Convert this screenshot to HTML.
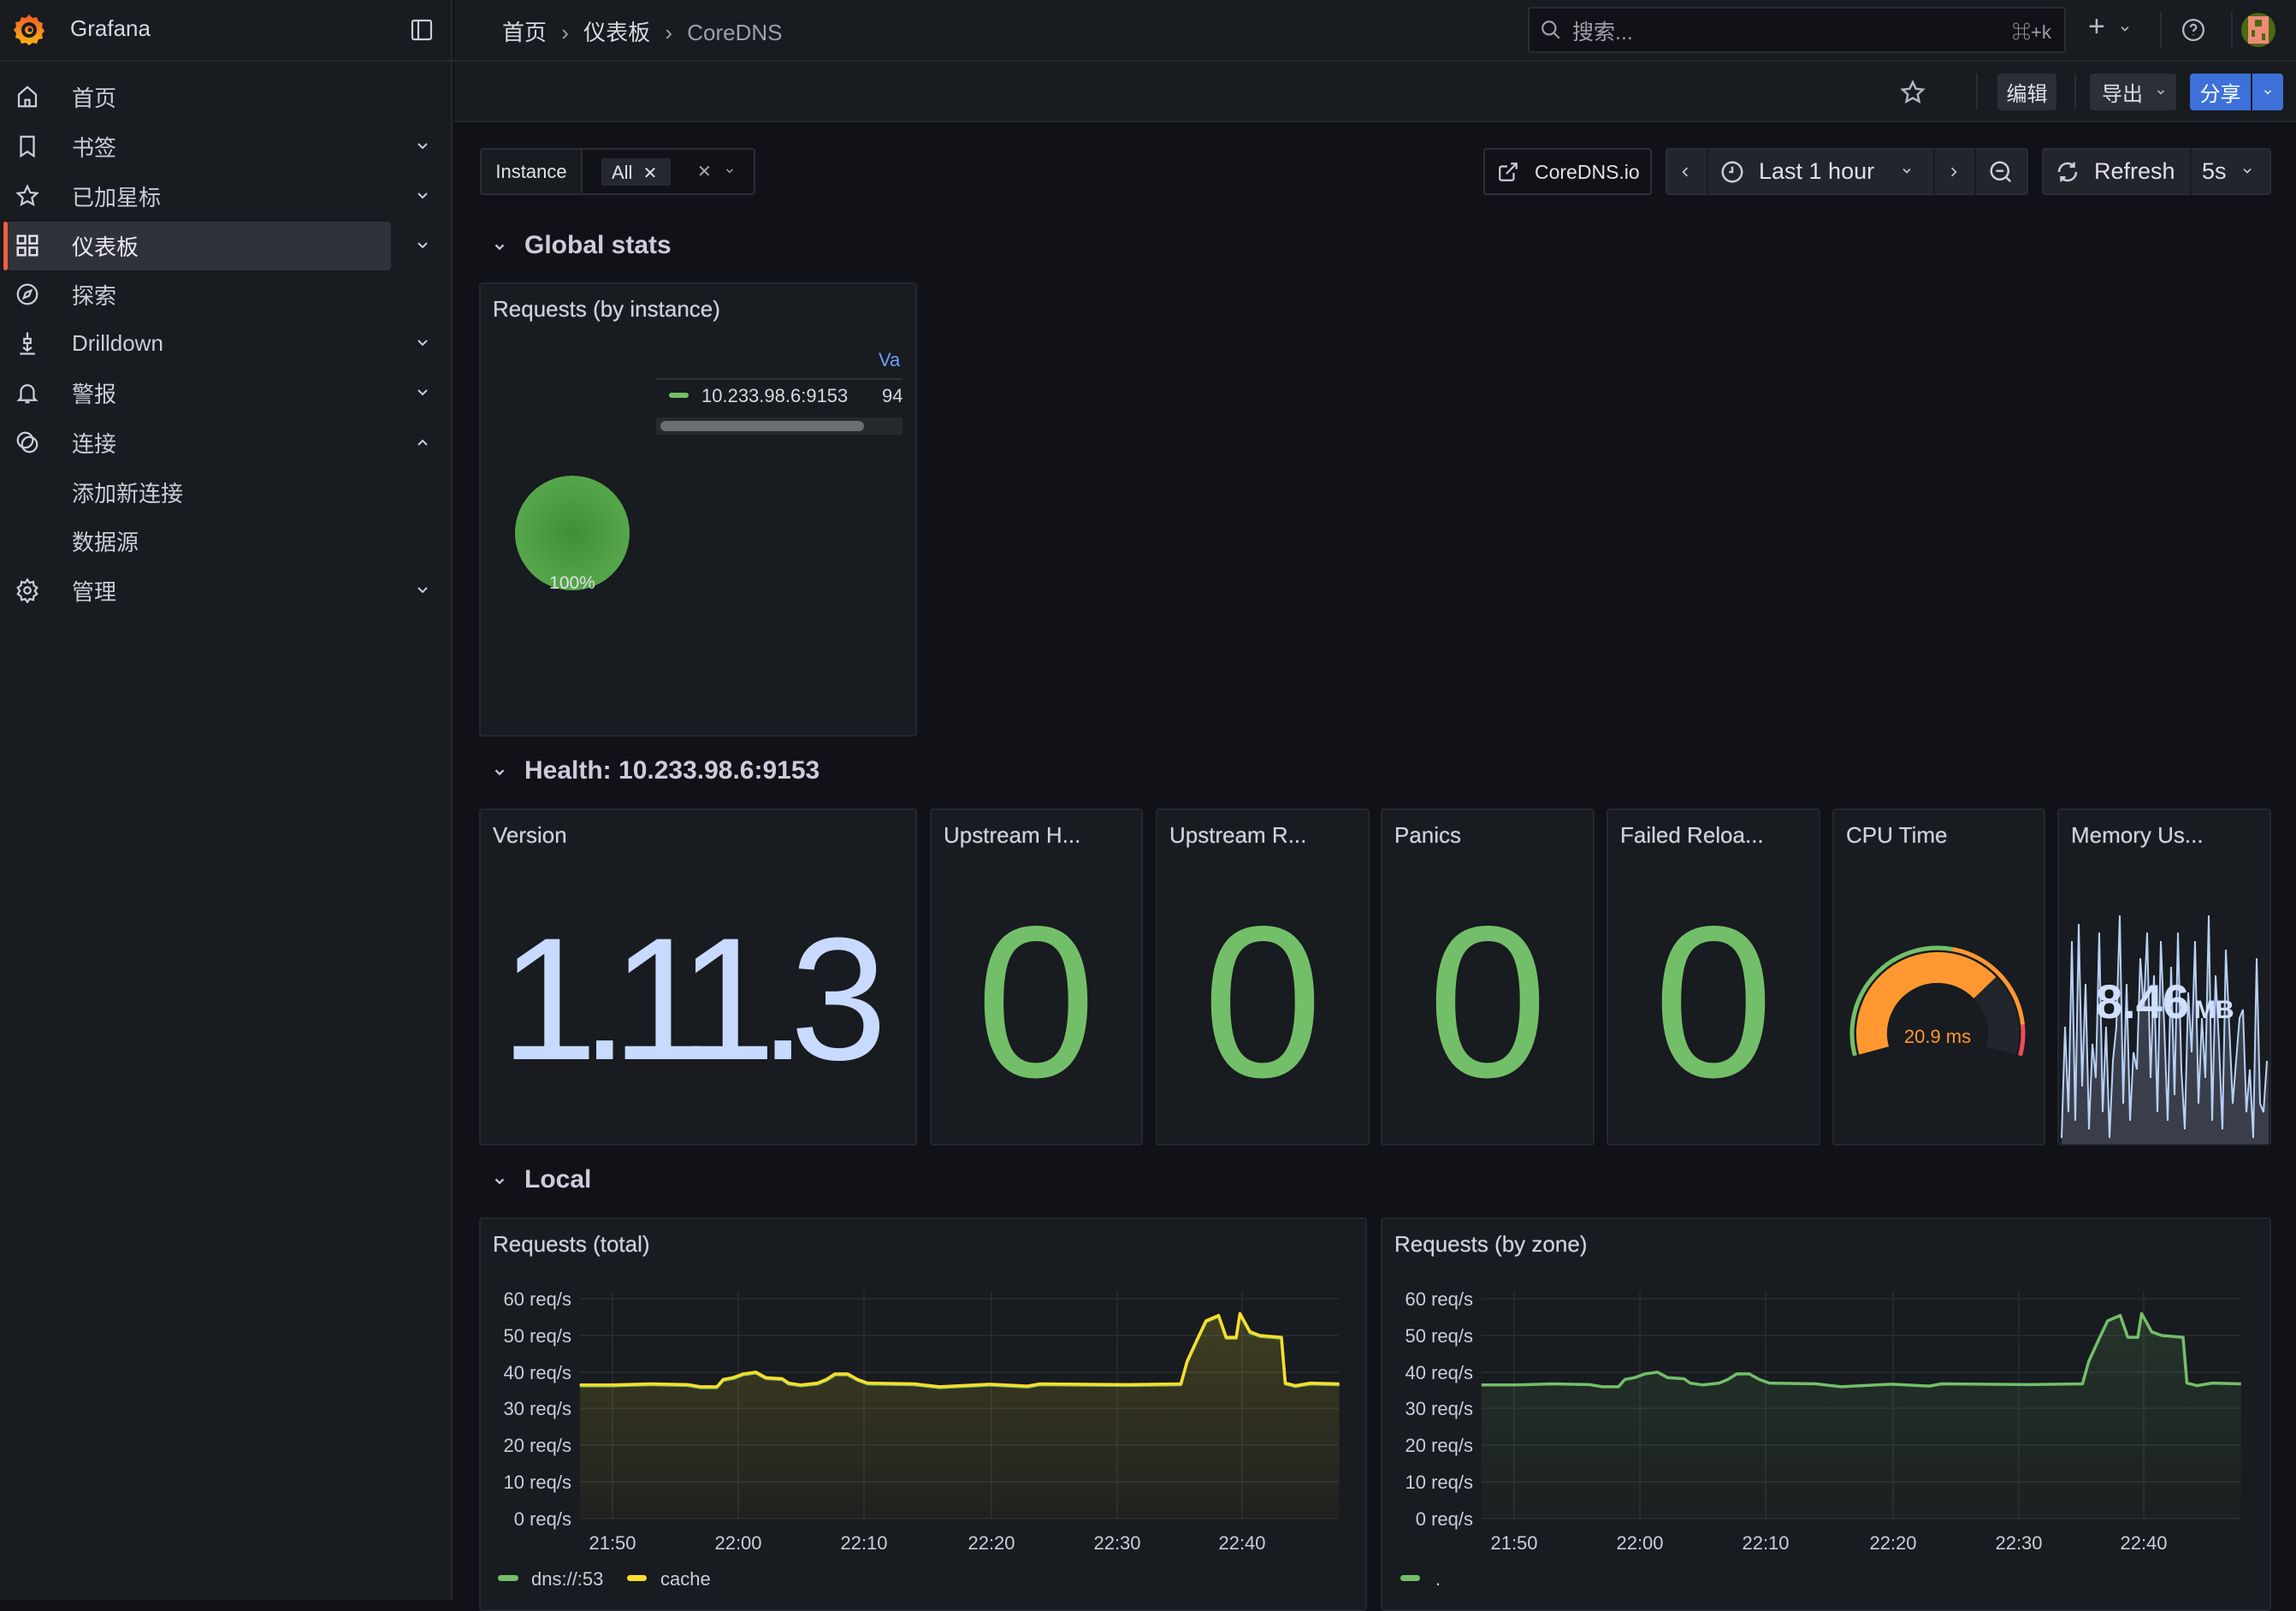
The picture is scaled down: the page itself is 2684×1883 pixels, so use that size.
<!DOCTYPE html>
<html><head><meta charset="utf-8">
<style>
*{margin:0;padding:0;box-sizing:border-box}
body{width:2684px;height:1870px;background:#111217;position:relative;overflow:hidden;font-family:"Liberation Sans","Noto Sans CJK SC",sans-serif;color:#ccccdc}
.a{position:absolute}
.sb{left:0;top:0;width:529px;height:1870px;background:#181b1f;border-right:2px solid #25282d}
.nav{position:absolute;left:0;width:529px;height:58px;font-size:26px;color:#ccccdc;display:flex;align-items:center}
.nav .t{position:absolute;left:84px}
.nav svg.i{position:absolute;left:17px;width:30px;height:30px}
.nav .ch{position:absolute;left:484px;width:20px;height:20px}
.panel{position:absolute;background:#181b1f;border:2px solid #24272d;border-radius:4px}
.ptitle{position:absolute;left:14px;top:14px;font-size:26px;color:#d0d0dc;white-space:nowrap;text-shadow:0 0 0.6px #d0d0dc}
.btn{position:absolute;border-radius:4px;font-size:24px;display:flex;align-items:center;justify-content:center}
.row{position:absolute;font-size:30px;font-weight:bold;color:#ccccdc}
</style></head><body>

<!-- sidebar -->
<div class="a sb"></div>
<div class="a" style="left:0;top:70px;width:2684px;height:2px;background:#25282d"></div>
<svg class="a" style="left:14px;top:14px" width="40" height="40" viewBox="0 0 40 40">
<defs><linearGradient id="lg" x1="0" y1="1" x2="0" y2="0"><stop offset="0" stop-color="#f9b416"/><stop offset="1" stop-color="#f05a28"/></linearGradient></defs>
<path d="M20 3l4 4 5-1 2 5 5 2-1 5 3 4-3 4 1 5-5 1-2 5-5-1-4 3-4-3-5 1-2-5-5-2 1-5-3-4 3-4-1-5 5-1 2-5 5 1z" fill="url(#lg)"/>
<circle cx="20" cy="21" r="9" fill="#181b1f"/><circle cx="20" cy="21" r="5" fill="url(#lg)"/><circle cx="21" cy="21" r="2.5" fill="#181b1f"/>
</svg>
<div class="a" style="left:82px;top:18px;font-size:26px;color:#d8d9e0">Grafana</div>
<svg class="a" style="left:480px;top:22px" width="26" height="26" viewBox="0 0 26 26" fill="none" stroke="#ccccdc" stroke-width="2.2"><rect x="2" y="2" width="22" height="22" rx="2"/><line x1="9" y1="2" x2="9" y2="24"/></svg>

<div class="a" style="left:8px;top:259px;width:449px;height:57px;background:#2f3238;border-radius:4px"></div>
<div class="a" style="left:4px;top:259px;width:5px;height:57px;background:#f55f3e;border-radius:3px"></div>

<div class="nav" style="top:84px"><svg class="i" viewBox="0 0 24 24" fill="none" stroke="#ccccdc" stroke-width="1.8"><path d="M4 10l8-7 8 7v11H4z M10 21v-6h4v6"/></svg><span class="t">首页</span></div>
<div class="nav" style="top:142px"><svg class="i" viewBox="0 0 24 24" fill="none" stroke="#ccccdc" stroke-width="1.8"><path d="M6 3h12v18l-6-4-6 4z"/></svg><span class="t">书签</span><svg class="ch" viewBox="0 0 20 20" fill="none" stroke="#ccccdc" stroke-width="2"><path d="M5 7l5 5 5-5"/></svg></div>
<div class="nav" style="top:200px"><svg class="i" viewBox="0 0 24 24" fill="none" stroke="#ccccdc" stroke-width="1.8"><path d="M12 3l2.7 5.8 6.3.7-4.7 4.3 1.3 6.2L12 16.9 6.4 20l1.3-6.2L3 9.5l6.3-.7z"/></svg><span class="t">已加星标</span><svg class="ch" viewBox="0 0 20 20" fill="none" stroke="#ccccdc" stroke-width="2"><path d="M5 7l5 5 5-5"/></svg></div>
<div class="nav" style="top:258px"><svg class="i" viewBox="0 0 24 24" fill="none" stroke="#e0e0e8" stroke-width="2"><rect x="3" y="3" width="7" height="7"/><rect x="14" y="3" width="7" height="7"/><rect x="3" y="14" width="7" height="7"/><rect x="14" y="14" width="7" height="7"/></svg><span class="t" style="color:#e8e8ee">仪表板</span><svg class="ch" viewBox="0 0 20 20" fill="none" stroke="#ccccdc" stroke-width="2"><path d="M5 7l5 5 5-5"/></svg></div>
<div class="nav" style="top:315px"><svg class="i" viewBox="0 0 24 24" fill="none" stroke="#ccccdc" stroke-width="1.8"><circle cx="12" cy="12" r="9"/><path d="M15.5 8.5l-2 5-5 2 2-5z"/></svg><span class="t">探索</span></div>
<div class="nav" style="top:372px"><svg class="i" viewBox="0 0 24 24" fill="none" stroke="#ccccdc" stroke-width="1.8"><path d="M12 2v6M9 8h6v4H9zM12 12v6M8 16l4 3 4-3M5 22h14"/></svg><span class="t">Drilldown</span><svg class="ch" viewBox="0 0 20 20" fill="none" stroke="#ccccdc" stroke-width="2"><path d="M5 7l5 5 5-5"/></svg></div>
<div class="nav" style="top:430px"><svg class="i" viewBox="0 0 24 24" fill="none" stroke="#ccccdc" stroke-width="1.8"><path d="M6 17V11a6 6 0 0 1 12 0v6l2 2H4zM10 21h4"/></svg><span class="t">警报</span><svg class="ch" viewBox="0 0 20 20" fill="none" stroke="#ccccdc" stroke-width="2"><path d="M5 7l5 5 5-5"/></svg></div>
<div class="nav" style="top:488px"><svg class="i" viewBox="0 0 24 24" fill="none" stroke="#ccccdc" stroke-width="1.8"><circle cx="10" cy="10" r="7"/><circle cx="14" cy="14" r="7"/></svg><span class="t">连接</span><svg class="ch" viewBox="0 0 20 20" fill="none" stroke="#ccccdc" stroke-width="2"><path d="M5 13l5-5 5 5"/></svg></div>
<div class="nav" style="top:546px"><span class="t">添加新连接</span></div>
<div class="nav" style="top:603px"><span class="t">数据源</span></div>
<div class="nav" style="top:661px"><svg class="i" viewBox="0 0 24 24" fill="none" stroke="#ccccdc" stroke-width="1.8"><circle cx="12" cy="12" r="3"/><path d="M12 2l2 3 3.5-1 .5 3.5 3 2-2 3 2 3-3 2-.5 3.5L14 20l-2 3-2-3-3.5 1L6 17.5l-3-2 2-3-2-3 3-2L6.5 4 10 5z"/></svg><span class="t">管理</span><svg class="ch" viewBox="0 0 20 20" fill="none" stroke="#ccccdc" stroke-width="2"><path d="M5 7l5 5 5-5"/></svg></div>

<!-- top bars -->
<div class="a" style="left:531px;top:0;width:2153px;height:70px;background:#181b1f"></div>
<div class="a" style="left:531px;top:72px;width:2153px;height:71px;background:#181b1f;border-bottom:2px solid #25282d"></div>
<div class="a" style="left:587px;top:18px;font-size:26px;color:#d8d9e0">首页 <span style="color:#9fa1a8;margin:0 10px">›</span> 仪表板 <span style="color:#9fa1a8;margin:0 10px">›</span> <span style="color:#9fa1a8">CoreDNS</span></div>

<div class="a" style="left:1786px;top:8px;width:629px;height:54px;background:#111217;border:2px solid #2a2d33;border-radius:4px"></div>
<svg class="a" style="left:1800px;top:22px" width="26" height="26" viewBox="0 0 24 24" fill="none" stroke="#9fa1a8" stroke-width="2"><circle cx="10" cy="10" r="7"/><path d="M15 15l6 6"/></svg>
<div class="a" style="left:1838px;top:18px;font-size:25px;color:#9fa1a8">搜索...</div>
<div class="a" style="left:2352px;top:20px;font-size:22px;color:#9fa1a8">⌘+k</div>
<div class="a" style="left:2441px;top:12px;font-size:34px;color:#b8b9c0">+</div>
<svg class="a" style="left:2476px;top:26px" width="16" height="16" viewBox="0 0 20 20" fill="none" stroke="#b8b9c0" stroke-width="2"><path d="M5 7l5 5 5-5"/></svg>
<div class="a" style="left:2525px;top:14px;width:2px;height:42px;background:#2a2d33"></div>
<svg class="a" style="left:2549px;top:20px" width="30" height="30" viewBox="0 0 24 24" fill="none" stroke="#b8b9c0" stroke-width="1.8"><circle cx="12" cy="12" r="9.5"/><path d="M9.5 9.5a2.5 2.5 0 1 1 3.5 2.3c-.7.4-1 .9-1 1.7M12 16.5v.5"/></svg>
<div class="a" style="left:2608px;top:14px;width:2px;height:42px;background:#2a2d33"></div>
<svg class="a" style="left:2620px;top:14px" width="40" height="42" viewBox="0 0 10 10"><ellipse cx="5" cy="5" rx="5" ry="5" fill="#4a6a10"/><rect x="2" y="1" width="6" height="8" fill="#f08a78"/><rect x="4" y="2" width="2" height="2" fill="#4a6a10"/><rect x="3" y="5" width="1" height="2" fill="#4a6a10"/><rect x="6" y="6" width="1" height="2" fill="#4a6a10"/></svg>

<svg class="a" style="left:2220px;top:92px" width="32" height="32" viewBox="0 0 24 24" fill="none" stroke="#b8b9c0" stroke-width="1.8"><path d="M12 3l2.7 5.8 6.3.7-4.7 4.3 1.3 6.2L12 16.9 6.4 20l1.3-6.2L3 9.5l6.3-.7z"/></svg>
<div class="a" style="left:2310px;top:86px;width:2px;height:42px;background:#2a2d33"></div>
<div class="btn" style="left:2335px;top:86px;width:69px;height:43px;background:#2c2f35;color:#e0e0e6">编辑</div>
<div class="a" style="left:2425px;top:86px;width:2px;height:42px;background:#2a2d33"></div>
<div class="btn" style="left:2443px;top:86px;width:101px;height:43px;background:#2c2f35;color:#e0e0e6;justify-content:flex-start;padding-left:14px">导出<svg style="margin-left:14px" width="14" height="14" viewBox="0 0 20 20" fill="none" stroke="#ccc" stroke-width="2"><path d="M5 7l5 5 5-5"/></svg></div>
<div class="btn" style="left:2560px;top:86px;width:71px;height:43px;background:#3d71d9;color:#fff;border-radius:4px 0 0 4px">分享</div>
<div class="btn" style="left:2633px;top:86px;width:36px;height:43px;background:#3d71d9;border-radius:0 4px 4px 0"><svg width="14" height="14" viewBox="0 0 20 20" fill="none" stroke="#fff" stroke-width="2"><path d="M5 7l5 5 5-5"/></svg></div>

<!-- variables -->
<div class="a" style="left:561px;top:173px;width:322px;height:55px;border:2px solid #2a2d33;border-radius:4px;background:#111217"></div>
<div class="a" style="left:561px;top:173px;width:120px;height:55px;border:2px solid #2a2d33;border-radius:4px 0 0 4px;background:#181b1f;font-size:22px;color:#e0e0e6;display:flex;align-items:center;justify-content:center">Instance</div>
<div class="a" style="left:703px;top:185px;width:81px;height:32px;background:#25282e;border-radius:3px;font-size:22px;color:#e0e0e6;padding:4px 0 0 12px">All <span style="font-size:20px;margin-left:6px">✕</span></div>
<div class="a" style="left:815px;top:188px;font-size:20px;color:#aaa">✕</div>
<svg class="a" style="left:846px;top:193px" width="14" height="14" viewBox="0 0 20 20" fill="none" stroke="#aaa" stroke-width="2"><path d="M5 7l5 5 5-5"/></svg>

<div class="a" style="left:1734px;top:173px;width:197px;height:55px;border:2px solid #2e3137;border-radius:4px;background:#111217"></div>
<svg class="a" style="left:1750px;top:188px" width="26" height="26" viewBox="0 0 24 24" fill="none" stroke="#ccccdc" stroke-width="2"><path d="M18 13v6a2 2 0 0 1-2 2H5a2 2 0 0 1-2-2V8a2 2 0 0 1 2-2h6M15 3h6v6M10 14L21 3"/></svg>
<div class="a" style="left:1794px;top:188px;font-size:23px;color:#e0e0e6">CoreDNS.io</div>

<div class="a" style="left:1947px;top:173px;width:424px;height:55px;border:2px solid #2a2d33;border-radius:4px;background:#22252b"></div>
<div class="a" style="left:1995px;top:173px;width:2px;height:55px;background:#181b1f"></div>
<div class="a" style="left:2260px;top:173px;width:2px;height:55px;background:#181b1f"></div>
<div class="a" style="left:2308px;top:173px;width:2px;height:55px;background:#181b1f"></div>
<svg class="a" style="left:1962px;top:192px" width="16" height="18" viewBox="0 0 20 20" fill="none" stroke="#ccccdc" stroke-width="2"><path d="M13 4l-6 6 6 6"/></svg>
<svg class="a" style="left:2010px;top:186px" width="30" height="30" viewBox="0 0 24 24" fill="none" stroke="#ccccdc" stroke-width="2"><circle cx="12" cy="12" r="9"/><path d="M12 7v5H9"/></svg>
<div class="a" style="left:2056px;top:185px;font-size:27px;color:#e0e0e6">Last 1 hour</div>
<svg class="a" style="left:2221px;top:192px" width="16" height="16" viewBox="0 0 20 20" fill="none" stroke="#ccccdc" stroke-width="2"><path d="M5 7l5 5 5-5"/></svg>
<svg class="a" style="left:2276px;top:192px" width="16" height="18" viewBox="0 0 20 20" fill="none" stroke="#ccccdc" stroke-width="2"><path d="M7 4l6 6-6 6"/></svg>
<svg class="a" style="left:2324px;top:186px" width="30" height="30" viewBox="0 0 24 24" fill="none" stroke="#ccccdc" stroke-width="2"><circle cx="11" cy="11" r="8"/><path d="M7.5 11h7M17 17l4 4"/></svg>

<div class="a" style="left:2387px;top:173px;width:268px;height:55px;border:2px solid #2a2d33;border-radius:4px;background:#22252b"></div>
<div class="a" style="left:2560px;top:173px;width:2px;height:55px;background:#181b1f"></div>
<svg class="a" style="left:2402px;top:186px" width="30" height="30" viewBox="0 0 24 24" fill="none" stroke="#ccccdc" stroke-width="2"><path d="M20 12a8 8 0 0 1-14 5.3M4 12a8 8 0 0 1 14-5.3M18 3v4h-4M6 21v-4h4"/></svg>
<div class="a" style="left:2448px;top:185px;font-size:27px;color:#e0e0e6">Refresh</div>
<div class="a" style="left:2574px;top:185px;font-size:27px;color:#e0e0e6">5s</div>
<svg class="a" style="left:2619px;top:192px" width="16" height="16" viewBox="0 0 20 20" fill="none" stroke="#ccccdc" stroke-width="2"><path d="M5 7l5 5 5-5"/></svg>

<!-- rows -->
<svg class="a" style="left:575px;top:280px" width="18" height="18" viewBox="0 0 20 20" fill="none" stroke="#ccccdc" stroke-width="2.4"><path d="M5 7l5 5 5-5"/></svg>
<div class="row" style="left:613px;top:270px">Global stats</div>
<svg class="a" style="left:575px;top:894px" width="18" height="18" viewBox="0 0 20 20" fill="none" stroke="#ccccdc" stroke-width="2.4"><path d="M5 7l5 5 5-5"/></svg>
<div class="row" style="left:613px;top:884px">Health: 10.233.98.6:9153</div>
<svg class="a" style="left:575px;top:1372px" width="18" height="18" viewBox="0 0 20 20" fill="none" stroke="#ccccdc" stroke-width="2.4"><path d="M5 7l5 5 5-5"/></svg>
<div class="row" style="left:613px;top:1362px">Local</div>

<!-- panels -->
<div class="panel" style="left:560px;top:330px;width:512px;height:531px"><div class="ptitle">Requests (by instance)</div></div>
<div class="panel" style="left:560px;top:945px;width:512px;height:394px"><div class="ptitle">Version</div></div>
<div class="panel" style="left:1087px;top:945px;width:249px;height:394px"><div class="ptitle">Upstream H...</div></div>
<div class="panel" style="left:1351px;top:945px;width:250px;height:394px"><div class="ptitle">Upstream R...</div></div>
<div class="panel" style="left:1614px;top:945px;width:250px;height:394px"><div class="ptitle">Panics</div></div>
<div class="panel" style="left:1878px;top:945px;width:250px;height:394px"><div class="ptitle">Failed Reloa...</div></div>
<div class="panel" style="left:2142px;top:945px;width:249px;height:394px"><div class="ptitle">CPU Time</div></div>
<div class="panel" style="left:2405px;top:945px;width:250px;height:394px;overflow:hidden"><div class="ptitle">Memory Us...</div></div>
<div class="panel" style="left:560px;top:1423px;width:1038px;height:460px"><div class="ptitle">Requests (total)</div></div>
<div class="panel" style="left:1614px;top:1423px;width:1041px;height:460px"><div class="ptitle">Requests (by zone)</div></div>

<svg class="a" style="left:0;top:0" width="2684" height="1870" font-family="Liberation Sans, sans-serif">
<defs>
<radialGradient id="pg"><stop offset="0" stop-color="#3f8f3a"/><stop offset="1" stop-color="#56a64b"/></radialGradient>
<linearGradient id="yf" x1="0" y1="0" x2="0" y2="1"><stop offset="0" stop-color="#fade2a" stop-opacity="0.18"/><stop offset="1" stop-color="#fade2a" stop-opacity="0.03"/></linearGradient>
<linearGradient id="gf" x1="0" y1="0" x2="0" y2="1"><stop offset="0" stop-color="#73bf69" stop-opacity="0.15"/><stop offset="1" stop-color="#73bf69" stop-opacity="0.03"/></linearGradient>
<g id="grid" stroke="#2a2d33" stroke-width="1.5">
<line x1="678" y1="1518" x2="1565" y2="1518"/><line x1="678" y1="1561" x2="1565" y2="1561"/><line x1="678" y1="1604" x2="1565" y2="1604"/><line x1="678" y1="1646" x2="1565" y2="1646"/><line x1="678" y1="1689" x2="1565" y2="1689"/><line x1="678" y1="1732" x2="1565" y2="1732"/><line x1="678" y1="1775" x2="1565" y2="1775"/>
<line x1="716" y1="1510" x2="716" y2="1775"/><line x1="863" y1="1510" x2="863" y2="1775"/><line x1="1010" y1="1510" x2="1010" y2="1775"/><line x1="1159" y1="1510" x2="1159" y2="1775"/><line x1="1306" y1="1510" x2="1306" y2="1775"/><line x1="1452" y1="1510" x2="1452" y2="1775"/>
</g>
<g id="labels" fill="#ccccdc" font-size="22" text-anchor="end">
<text x="668" y="1526">60 req/s</text><text x="668" y="1569">50 req/s</text><text x="668" y="1612">40 req/s</text><text x="668" y="1654">30 req/s</text><text x="668" y="1697">20 req/s</text><text x="668" y="1740">10 req/s</text><text x="668" y="1783">0 req/s</text>
<g text-anchor="middle"><text x="716" y="1811">21:50</text><text x="863" y="1811">22:00</text><text x="1010" y="1811">22:10</text><text x="1159" y="1811">22:20</text><text x="1306" y="1811">22:30</text><text x="1452" y="1811">22:40</text></g>
</g>
<polyline id="ln" fill="none" stroke-width="3.5" stroke-linejoin="round" points="677.8,1618.8 716,1618.8 760.1,1617.5 804.2,1618.4 818.9,1620.9 838,1620.9 845.4,1612.4 857.1,1610.2 868.9,1605.9 883.6,1603.8 895.3,1610.2 914.5,1611.5 921.8,1616.6 936.5,1618.8 955.6,1616.6 965.9,1612.4 976.2,1605.9 990.9,1605.9 1002.7,1612.4 1014.4,1616.6 1068.8,1617.5 1098.2,1620.9 1157,1617.9 1201.1,1620.1 1215.8,1617.5 1318.7,1618.4 1380.4,1617.5 1387.8,1591 1399.6,1565.3 1409.8,1543.9 1424.5,1537.5 1433.4,1563.1 1445.1,1563.1 1449.5,1535.3 1461.3,1556.7 1473,1561 1498,1563.1 1502.5,1616.6 1514.2,1619.6 1531.9,1616.6 1565.7,1617.5"/>
<polygon id="ar" points="677.8,1775 677.8,1618.8 716,1618.8 760.1,1617.5 804.2,1618.4 818.9,1620.9 838,1620.9 845.4,1612.4 857.1,1610.2 868.9,1605.9 883.6,1603.8 895.3,1610.2 914.5,1611.5 921.8,1616.6 936.5,1618.8 955.6,1616.6 965.9,1612.4 976.2,1605.9 990.9,1605.9 1002.7,1612.4 1014.4,1616.6 1068.8,1617.5 1098.2,1620.9 1157,1617.9 1201.1,1620.1 1215.8,1617.5 1318.7,1618.4 1380.4,1617.5 1387.8,1591 1399.6,1565.3 1409.8,1543.9 1424.5,1537.5 1433.4,1563.1 1445.1,1563.1 1449.5,1535.3 1461.3,1556.7 1473,1561 1498,1563.1 1502.5,1616.6 1514.2,1619.6 1531.9,1616.6 1565.7,1617.5 1565.7,1775"/>
</defs>

<!-- pie panel -->
<circle cx="669" cy="623" r="67" fill="url(#pg)"/>
<text x="669" y="688" fill="#e0e0e6" font-size="21" text-anchor="middle">100%</text>
<text x="1027" y="428" fill="#6e9fff" font-size="22">Va</text>
<line x1="767" y1="443" x2="1055" y2="443" stroke="#2f3238" stroke-width="2"/>
<rect x="782" y="459" width="23" height="6" rx="3" fill="#73bf69"/>
<text x="820" y="470" fill="#d8d9e0" font-size="22">10.233.98.6:9153</text>
<text x="1031" y="470" fill="#d8d9e0" font-size="22">94</text>
<rect x="767" y="488" width="288" height="20" fill="#26292e"/>
<rect x="772" y="492" width="238" height="12" rx="6" fill="#6b6d72"/>

<!-- stats -->
<text x="801" y="1238" fill="#c8daff" font-size="204" text-anchor="middle" letter-spacing="-20">1.11.3</text>
<g fill="#73bf69" font-size="252" text-anchor="middle">
<text x="1211" y="1258">0</text><text x="1476" y="1258">0</text><text x="1739" y="1258">0</text><text x="2003" y="1258">0</text>
</g>

<!-- gauge -->
<g fill="none">
<path d="M2168.4 1233.9 A100 100 0 0 1 2282.4 1109.5" stroke="#73bf69" stroke-width="5"/>
<path d="M2282.4 1109.5 A100 100 0 0 1 2364.5 1197.5" stroke="#ff9830" stroke-width="5"/>
<path d="M2364.5 1197.5 A100 100 0 0 1 2361.6 1233.9" stroke="#f2495c" stroke-width="5"/>
<path d="M2190.6 1227.9 A77 77 0 0 1 2320.4 1154.5" stroke="#ff9830" stroke-width="36"/>
<path d="M2320.4 1154.5 A77 77 0 0 1 2339.4 1227.9" stroke="#22252b" stroke-width="36"/>
</g>
<text x="2265" y="1219" fill="#ff9830" font-size="22" text-anchor="middle">20.9 ms</text>

<!-- memory sparkline -->
<polygon fill="#3e4350" opacity="0.9" points="2410,1337 2410,1330 2414,1200 2418,1300 2422,1100 2426,1310 2430,1080 2434,1270 2438,1150 2442,1320 2446,1220 2450,1260 2454,1090 2458,1300 2462,1200 2466,1330 2470,1240 2474,1200 2478,1070 2482,1290 2486,1150 2490,1310 2494,1230 2498,1250 2502,1120 2506,1180 2510,1090 2514,1260 2518,1140 2522,1300 2526,1100 2530,1200 2534,1310 2538,1130 2542,1280 2546,1090 2550,1250 2554,1320 2558,1160 2562,1230 2566,1100 2570,1290 2574,1190 2578,1260 2582,1070 2586,1310 2590,1140 2594,1220 2598,1320 2602,1110 2606,1200 2610,1290 2614,1240 2618,1190 2622,1180 2626,1300 2630,1250 2634,1330 2638,1120 2642,1290 2646,1300 2650,1240 2652,1240 2652,1337"/>
<polyline fill="none" stroke="#b8d0f5" stroke-width="2" points="2410,1330 2414,1200 2418,1300 2422,1100 2426,1310 2430,1080 2434,1270 2438,1150 2442,1320 2446,1220 2450,1260 2454,1090 2458,1300 2462,1200 2466,1330 2470,1240 2474,1200 2478,1070 2482,1290 2486,1150 2490,1310 2494,1230 2498,1250 2502,1120 2506,1180 2510,1090 2514,1260 2518,1140 2522,1300 2526,1100 2530,1200 2534,1310 2538,1130 2542,1280 2546,1090 2550,1250 2554,1320 2558,1160 2562,1230 2566,1100 2570,1290 2574,1190 2578,1260 2582,1070 2586,1310 2590,1140 2594,1220 2598,1320 2602,1110 2606,1200 2610,1290 2614,1240 2618,1190 2622,1180 2626,1300 2630,1250 2634,1330 2638,1120 2642,1290 2646,1300 2650,1240"/>
<text x="2450" y="1190" fill="#cfe0ff" font-size="56" font-weight="bold">8.46<tspan font-size="30" dx="6">MB</tspan></text>

<!-- chart left -->
<use href="#grid"/><use href="#labels"/>
<use href="#ar" fill="url(#yf)"/>
<use href="#ln" stroke="#73bf69" transform="translate(0,1)"/>
<use href="#ln" stroke="#fade2a"/>
<rect x="582" y="1841" width="24" height="7" rx="3.5" fill="#73bf69"/>
<text x="621" y="1853" fill="#ccccdc" font-size="22">dns://:53</text>
<rect x="733" y="1841" width="23" height="7" rx="3.5" fill="#fade2a"/>
<text x="772" y="1853" fill="#ccccdc" font-size="22">cache</text>

<!-- chart right -->
<g transform="translate(1054,0)">
<use href="#grid"/><use href="#labels"/>
<use href="#ar" fill="url(#gf)"/>
<use href="#ln" stroke="#73bf69"/>
</g>
<rect x="1637" y="1841" width="23" height="7" rx="3.5" fill="#73bf69"/>
<text x="1678" y="1853" fill="#ccccdc" font-size="22">.</text>
</svg>
</body></html>
